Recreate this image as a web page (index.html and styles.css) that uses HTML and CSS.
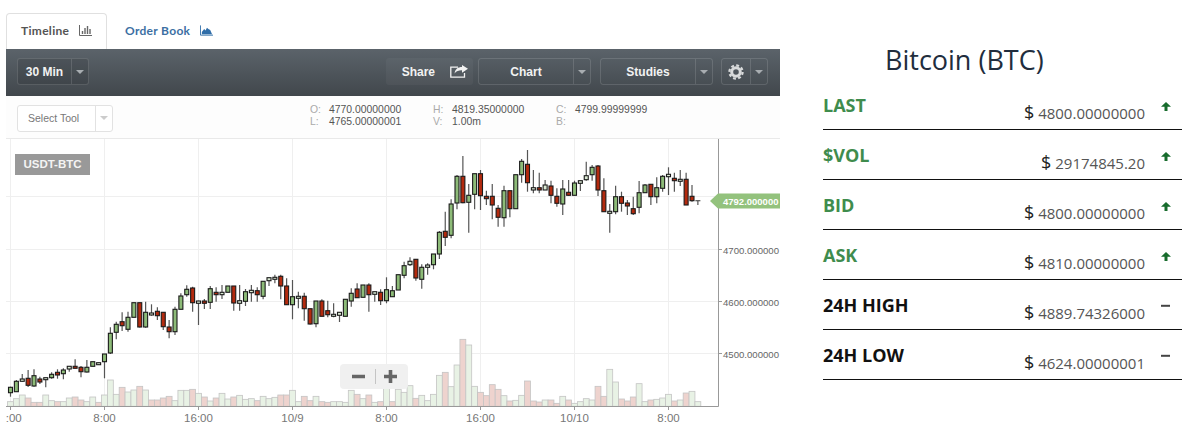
FILE: index.html
```html
<!DOCTYPE html>
<html lang="en">
<head>
<meta charset="utf-8">
<title>Bitcoin (BTC)</title>
<link rel="stylesheet" href="styles.css">
</head>
<body>
<main class="page">
  <section class="market">
    <nav class="tabs">
      <a class="tab tab-active">Timeline
        <svg class="tab-icon" viewBox="0 0 13 11"><path class="icon-line-grey" d="M.5 0V10.500H13"/><path class="icon-line-grey thick" d="M3.500 9V6M6 9V3M8.500 9V1M11 9V4"/></svg>
      </a>
      <a class="tab tab-link">Order Book
        <svg class="tab-icon" viewBox="0 0 14 11"><path class="icon-line-blue" d="M.5 0V10.500H14"/><path class="icon-fill-blue" d="M2 9.500V7L4.500 4 6 5.500 7.500 2.500 9 4 11 5 13 9.500Z"/></svg>
      </a>
    </nav>

    <div class="toolbar">
      <div class="split split-interval"><span class="split-main">30 Min</span><span class="split-caret"><i class="caret"></i></span></div>
      <div class="toolbar-right">
        <button class="share">Share
          <svg class="share-icon" viewBox="0 0 18 13"><path class="share-box" d="M8 2.200H.8V12.200H14.500V8"/><path class="share-arrow" d="M18 3.800 12 0V2C8 2 5.200 4 4.600 8.400 6.600 5.800 9 5.200 12 5.300V7.800Z"/></svg>
        </button>
        <div class="split split-wide"><span class="split-main">Chart</span><span class="split-caret"><i class="caret"></i></span></div>
        <div class="split split-wide split-studies"><span class="split-main">Studies</span><span class="split-caret"><i class="caret"></i></span></div>
        <div class="split split-gear">
          <span class="split-main">
            <svg class="gear" viewBox="0 0 16 16"><circle class="gear-ring" cx="8" cy="8" r="4.300"/><circle class="gear-teeth" cx="8" cy="8" r="6.600"/></svg>
          </span>
          <span class="split-caret"><i class="caret"></i></span>
        </div>
      </div>
    </div>

    <div class="subbar">
      <div class="tool-select"><span class="tool-name">Select Tool</span><span class="tool-caret"><i class="caret caret-light"></i></span></div>
      <dl class="ohlc">
        <dt>O:</dt><dd>4770.00000000</dd>
        <dt>H:</dt><dd>4819.35000000</dd>
        <dt>C:</dt><dd>4799.99999999</dd>
        <dt>L:</dt><dd>4765.00000001</dd>
        <dt>V:</dt><dd>1.00m</dd>
        <dt>B:</dt><dd></dd>
      </dl>
    </div>

    <div class="chart">
      <svg class="plot" viewBox="6 139 774 291" width="774" height="291">
        <g class="grid">
          <path d="M6 196.500H718M6 249.500H718M6 301.500H718M6 353.500H718"/>
          <path d="M10.500 139V406M104.500 139V406M198.500 139V406M292.500 139V406M386.500 139V406M480.500 139V406M574.500 139V406M668.500 139V406"/>
        </g>
        <g id="vols"></g>
        <g id="candles"></g>
        <path class="axis" d="M718.500 139V406.500H6"/>
        <path class="axis" d="M10.500 406V410M104.500 406V410M198.500 406V410M292.500 406V410M386.500 406V410M480.500 406V410M574.500 406V410M668.500 406V410M718 249.500H722M718 301.500H722M718 353.500H722"/>
        <g class="y-labels">
          <text x="723" y="253.500">4700.000000</text>
          <text x="723" y="305.500">4600.000000</text>
          <text x="723" y="357.500">4500.000000</text>
        </g>
        <g class="x-labels">
          <text x="10.500" y="422">0:00</text>
          <text x="104.500" y="422">8:00</text>
          <text x="198.500" y="422">16:00</text>
          <text x="292.500" y="422">10/9</text>
          <text x="386.500" y="422">8:00</text>
          <text x="480.500" y="422">16:00</text>
          <text x="574.500" y="422">10/10</text>
          <text x="668.500" y="422">8:00</text>
        </g>
        <path class="price-tag" d="M710 201 718 193.500H782V208.500H718Z"/>
        <text class="price-text" x="723" y="205">4792.000000</text>
      </svg>
      <div class="pair-badge">USDT-BTC</div>
      <div class="zoomer">
        <svg class="zoom-icon" viewBox="0 0 68 25"><path class="zoom-glyph" d="M12 12.500H25M44 12.500H57M50.500 6V19"/><path class="zoom-divider" d="M35.500 5V20"/></svg>
      </div>
    </div>
  </section>

  <aside class="summary">
    <h1 class="coin">Bitcoin (BTC)</h1>
    <div class="stat stat-up">
      <span class="stat-label">LAST</span>
      <span class="stat-value"><b>$</b> 4800.00000000</span>
      <svg class="trend" viewBox="0 0 10 9"><path class="trend-up" d="M5 0 10 4.800H6.500V9H3.500V4.800H0Z"/></svg>
    </div>
    <div class="stat stat-up">
      <span class="stat-label">$VOL</span>
      <span class="stat-value"><b>$</b> 29174845.20</span>
      <svg class="trend" viewBox="0 0 10 9"><path class="trend-up" d="M5 0 10 4.800H6.500V9H3.500V4.800H0Z"/></svg>
    </div>
    <div class="stat stat-up">
      <span class="stat-label">BID</span>
      <span class="stat-value"><b>$</b> 4800.00000000</span>
      <svg class="trend" viewBox="0 0 10 9"><path class="trend-up" d="M5 0 10 4.800H6.500V9H3.500V4.800H0Z"/></svg>
    </div>
    <div class="stat stat-up">
      <span class="stat-label">ASK</span>
      <span class="stat-value"><b>$</b> 4810.00000000</span>
      <svg class="trend" viewBox="0 0 10 9"><path class="trend-up" d="M5 0 10 4.800H6.500V9H3.500V4.800H0Z"/></svg>
    </div>
    <div class="stat">
      <span class="stat-label">24H HIGH</span>
      <span class="stat-value"><b>$</b> 4889.74326000</span>
      <svg class="trend" viewBox="0 0 10 9"><path class="trend-flat" d="M0 3.800H9"/></svg>
    </div>
    <div class="stat">
      <span class="stat-label">24H LOW</span>
      <span class="stat-value"><b>$</b> 4624.00000001</span>
      <svg class="trend" viewBox="0 0 10 9"><path class="trend-flat" d="M0 3.800H9"/></svg>
    </div>
  </aside>
</main>
<script src="chart.js"></script>
</body>
</html>
```

FILE: styles.css
```css
* { box-sizing: border-box; }
html, body { margin: 0; padding: 0; background: #fff; }
body { width: 1200px; height: 443px; overflow: hidden; font-family: "Liberation Sans", Arial, sans-serif; }
.page { display: flex; align-items: flex-start; }

/* left column */
.market { width: 774px; margin-left: 6px; flex: none; }
.tabs { display: flex; height: 49px; padding-top: 13px; }
.tab { display: flex; align-items: center; gap: 10px; font-family: Lato, sans-serif; font-weight: 700; font-size: 12px; letter-spacing: .3px; height: 36px; }
.tab-active { width: 101px; padding: 0 0 2px 14px; color: #555; border: 1px solid #e0e0e0; border-bottom: 0; border-radius: 4px 4px 0 0; background: #fff; }
.tab-link { padding: 0 0 2px 18px; color: #3c6fa3; }
.tab-icon { width: 13px; height: 11px; flex: none; }
.icon-line-grey { fill: none; stroke: #666; stroke-width: 1; }
.icon-line-grey.thick { stroke-width: 1.400; }
.icon-line-blue { fill: none; stroke: #2f6da8; stroke-width: 1; }
.icon-fill-blue { fill: #2f6da8; }

.toolbar { display: flex; align-items: center; justify-content: space-between; height: 47px; padding: 0 12px 2px 11px; background: linear-gradient(#5b636a, #41474c); }
.toolbar-right { display: flex; align-items: center; }
.split { display: flex; height: 27px; border: 1px solid rgba(255, 255, 255, .13); border-radius: 3px; color: #fff; font-size: 12px; font-weight: 700; }
.split-main { display: flex; align-items: center; justify-content: center; flex: 1; border-right: 1px solid rgba(255, 255, 255, .13); color: #f2f2f2; }
.split-caret { display: flex; align-items: center; justify-content: center; width: 16px; flex: none; }
.caret { width: 0; height: 0; border: 4px solid transparent; border-top: 4px solid #a8adb1; border-bottom: 0; }
.caret-light { border-top-color: #ccc; }
.split-interval { width: 72px; background: rgba(0, 0, 0, .1); }
.split-wide { width: 113px; margin-left: 5px; }
.split-studies { margin-left: 9px; }
.split-gear { width: 47px; margin-left: 8px; }
.share { display: flex; align-items: center; justify-content: flex-end; gap: 15px; width: 87px; height: 27px; padding: 0 5px 0 0; border: 0; border-radius: 3px; background: rgba(255, 255, 255, .04); color: #f2f2f2; font: 700 12px "Liberation Sans", Arial, sans-serif; }
.share-icon { width: 18px; height: 13px; flex: none; }
.share-box { fill: none; stroke: #f2f2f2; stroke-width: 1.300; }
.share-arrow { fill: #f2f2f2; }
.gear { width: 16px; height: 16px; }
.gear-ring { fill: none; stroke: #d8dadb; stroke-width: 3; }
.gear-teeth { fill: none; stroke: #d8dadb; stroke-width: 2.200; stroke-dasharray: 2.900 2.284; }

.subbar { display: flex; align-items: center; height: 43px; padding: 2px 0 0 11px; background: #fdfdfd; border-bottom: 1px solid #e9e9e9; }
.tool-select { display: flex; width: 96px; height: 27px; border: 1px solid #e2e2e2; border-radius: 3px; background: #fff; color: #777; font-size: 10.500px; }
.tool-name { display: flex; align-items: center; flex: 1; border-right: 1px solid #e2e2e2; padding-left: 10px; }
.tool-caret { display: flex; align-items: center; justify-content: center; width: 16px; }
.ohlc { display: grid; grid-template-columns: 19px 104px 19px 104px 19px 80px; grid-template-rows: 12px 12px; margin: 0 0 4px 197px; font-size: 10.400px; line-height: 12px; }
.ohlc dt { color: #aaa; }
.ohlc dd { margin: 0; color: #555; }

/* chart */
.chart { position: relative; height: 291px; }
.plot { display: block; overflow: hidden; }
.grid path { fill: none; stroke: #efefef; stroke-width: 1; }
.axis { fill: none; stroke: #999; stroke-width: 1; }
.y-labels text { font: 9.600px "Liberation Sans", Arial, sans-serif; fill: #666; }
.x-labels text { font: 11.500px "Liberation Sans", Arial, sans-serif; fill: #777; text-anchor: middle; }
.price-tag { fill: #93c27d; }
.price-text { font: 700 9.500px "Liberation Sans", Arial, sans-serif; fill: #fff; }
.vol { stroke: #c4c4c4; stroke-width: .8; }
.vol-g { fill: #e8f2e5; }
.vol-r { fill: #eed3ce; }
.wick { stroke: #555; stroke-width: 1.200; }
.body { stroke: #1a1a1a; stroke-width: 1.100; }
.body-g { fill: #8dbb78; }
.body-r { fill: #b32a0e; }
.body-s { fill: #dcebd5; }
.pair-badge { position: absolute; left: 9px; top: 15px; width: 75px; height: 21px; background: #999; color: #f4f4f4; font-size: 11.500px; font-weight: 700; line-height: 21px; text-align: center; }
.zoomer { position: absolute; left: 334px; top: 225px; width: 68px; height: 25px; border-radius: 4px; background: #f0f0f0; }
.zoom-icon { display: block; width: 68px; height: 25px; }
.zoom-glyph { fill: none; stroke: #666; stroke-width: 3.600; }
.zoom-divider { fill: none; stroke: #c4c4c4; stroke-width: 1; }

/* right column */
.summary { width: 359px; margin-left: 43px; flex: none; }
.coin { height: 80px; margin: 0; padding: 40px 0 0 62px; font: 400 27px/40px "Open Sans", sans-serif; color: #212d3d; }
.stat { display: flex; align-items: flex-start; height: 50px; border-bottom: 1px solid #111; font-family: "Open Sans", sans-serif; }
.stat-label { padding-top: 13px; font-size: 18px; line-height: 24px; font-weight: 700; color: #111; }
.stat-up .stat-label { color: #3f8c4d; }
.stat-value { margin-left: auto; padding-top: 22px; font-size: 15px; line-height: 20px; color: #555; }
.stat-value b { font-size: 18px; line-height: 20px; font-weight: 400; color: #222; }
.trend { width: 10px; height: 9px; margin: 22px 11px 0 16px; flex: none; }
.trend-up { fill: #176b2c; }
.trend-flat { fill: none; stroke: #444; stroke-width: 2; }
```

FILE: chart.js
```js
// candle: [kind, wickTop, bodyTop, bodyBottom, wickBottom] in plot pixels
const CANDLES = [
['g',386.7,387.3,392.7,396.7],['g',380,381.3,391.7,391.7],['s',374,379,381.3,381.7],['r',370,378.3,385.3,387],
['g',369.3,375.7,386,386.7],['r',376.7,379,382,384],['s',377.7,377.7,379.7,387.3],['g',372.3,374.3,377.7,378.7],
['r',369.3,372.3,375,378.7],['g',368.3,370,373.7,379.3],['s',366.3,366.3,369,371.7],['r',359.3,366.3,368.3,368.3],
['r',366,367.3,371.7,377.3],['g',360,367.3,372,372.5],['g',361.7,361.7,366.3,366.3],['s',362.7,362.7,364.7,365],
['g',354,354,361.7,378.3],['g',327.3,333.3,353,354],['g',321.7,324.3,332.3,339.3],['r',312.3,321.7,325.7,331],
['g',311.7,317.3,329.3,331.7],['g',302.7,302.7,317.3,317.3],['r',302.7,302.7,327,327.5],['g',301.7,312.3,327,327.7],
['s',304.3,313,315,315.7],['r',307.3,311.3,315.7,320],['r',312.3,312.3,326.7,330],['r',320,327,331.7,338.3],
['g',306.7,309.3,331.7,335],['g',293.3,296,309.3,309.3],['g',285.3,289.3,294.7,296.7],['r',286.7,288,302.7,311.7],
['s',300.7,301,303.3,325],['r',299,301,303.3,309],['g',286,288.7,302.3,309],['r',287.3,292.3,294.7,301.7],
['s',285,292.3,294.7,299],['g',286,286,292.3,292.3],['r',286,286,303,310.7],['s',285,300.7,303.3,310.7],
['g',289,291.7,301.3,306],['s',285,290.3,292.7,301.7],['r',287.3,290.7,294.7,301.7],['g',281.3,281.3,296.3,299.3],
['s',277.7,277.7,280.7,286],['s',274.7,277.3,279.3,283.3],['r',274.7,276.3,286,299.3],['r',278.3,286,304.7,304.7],
['g',280,296.7,304.7,319.3],['s',291.7,296.3,298.3,308.3],['r',292.7,296.3,308.7,320.7],['r',308.7,308.7,324,324.5],
['g',301,301,323.7,327.3],['r',299.3,301,316.3,316.3],['r',300.7,310.7,314.7,317.3],['s',303.3,314.3,316.3,317.3],
['s',312.3,312.3,315.3,322],['g',299.3,299.3,316.3,316.3],['g',288.3,293.3,301,306.7],['r',283.3,289,297.7,298],
['g',285,285,297.3,297.3],['r',283.3,285,294.7,311.7],['s',291.7,291.7,294.3,301.7],['r',289.3,292.3,300.7,305],
['g',277.3,289.7,300.7,303.3],['g',286,290.7,296.7,296.7],['g',274.7,274.7,290,290],['g',261.7,265.7,275.3,278.3],
['s',257.3,261.3,264.7,266],['r',259,259.3,278,280.7],['g',264.3,267.3,279.3,288.7],['s',263.3,265,267.3,274.7],
['g',254,254,264.7,269.3],['g',231,232.3,254,259],['r',211.7,231.3,237.3,246],['g',199.3,204,235.3,238.3],
['g',175,176.3,203,209.3],['r',156,176.3,202.7,203.3],['g',184,195.3,202.3,232.7],['g',173.7,173.7,194.3,209.3],
['r',170,173.7,195.7,210],['r',190.7,196.3,198.7,205],['r',184,196.3,205,219.3],['r',205,208.3,217.3,226.7],
['g',185.7,190.7,217.7,226.7],['r',190.7,190.7,208.7,217.3],['g',174.7,174.7,208.7,208.7],['g',159,161.3,174.7,182.7],
['r',150,164.3,182.7,191.7],['s',170,187.7,190,193.3],['r',172.7,187.7,190,193.3],['s',180,185,190,190],
['r',180.7,186,195.3,203.3],['r',188.3,196.3,203.3,206.7],['g',180,189,204,215],['r',180,192.3,195.3,195.7],
['g',180.7,183,195.3,195.3],['s',180.7,180.7,183.3,191],['s',161.7,175.7,179.7,180.7],['g',165,167.3,174.7,180.7],
['r',165,166,190,196],['r',178.3,190.7,211.7,211.7],['s',204,211.3,213.3,232.7],['g',185.7,196.7,211.7,214.3],
['r',191.7,196.7,203.3,211.7],['r',200,203,206,215],['r',196.7,208.7,213.7,215],['g',181,192.7,207.3,213.3],
['g',184,185,192.7,192.7],['r',184.3,184.3,196.7,205],['g',177.3,187.7,196.7,203.3],['g',175,176.3,188.3,191.7],
['s',167.3,174.3,176.7,195],['r',172.7,178.3,180.7,191.7],['s',170,179.3,181.3,186],['r',172.7,179.3,205,205],
['r',185,196.3,200.7,201.7],['t',200.7,200.7,200.7,205]
];
// volume: top of the bar in 3x crop units from y=300; negative means a red bar
const VOLS = [
305,296,285,-294,-307,-307,285,302,-305,305,294,-291,-300,305,291,-307,285,240,283,-262,
276,270,-259,270,-300,-300,-294,-289,302,271,271,-268,280,-291,303,-294,280,297,-291,286,
298,296,-302,289,296,292,-285,-285,271,305,-289,-302,289,-305,-307,305,305,307,271,-283,
296,-285,307,-305,262,-305,268,277,257,-295,286,302,283,226,-217,260,195,-118,135,259,
-277,-287,-254,-268,287,-303,301,286,-243,-303,-306,300,-300,-310,289,-300,310,305,296,300,
-259,-289,208,246,-297,-303,-291,251,305,-300,298,294,283,-303,300,-279,274,305
];
const STEP = 5.875, X0 = 10.5, BASE = 406.3, NS = "http://www.w3.org/2000/svg";

function el(parent, name, cls, attrs) {
  const node = document.createElementNS(NS, name);
  node.setAttribute("class", cls);
  for (const k in attrs) node.setAttribute(k, attrs[k]);
  parent.appendChild(node);
}

const volLayer = document.getElementById("vols");
VOLS.forEach((v, i) => {
  const top = 300 + Math.abs(v) / 3, cx = X0 + STEP * i;
  el(volLayer, "rect", "vol " + (v < 0 ? "vol-r" : "vol-g"), { x: cx - STEP / 2, y: top, width: STEP, height: BASE - top });
});

const candleLayer = document.getElementById("candles");
CANDLES.forEach((c, i) => {
  const cx = X0 + STEP * i, [kind, wt, bt, bb, wb] = c;
  el(candleLayer, "line", "wick", { x1: cx, x2: cx, y1: wt, y2: wb });
  if (kind === "t") {
    el(candleLayer, "line", "wick", { x1: cx - 2.5, x2: cx + 2.5, y1: bt, y2: bt });
    return;
  }
  el(candleLayer, "rect", "body body-" + kind, { x: cx - 2, y: bt, width: 4, height: Math.max(bb - bt, 1) });
});
```
